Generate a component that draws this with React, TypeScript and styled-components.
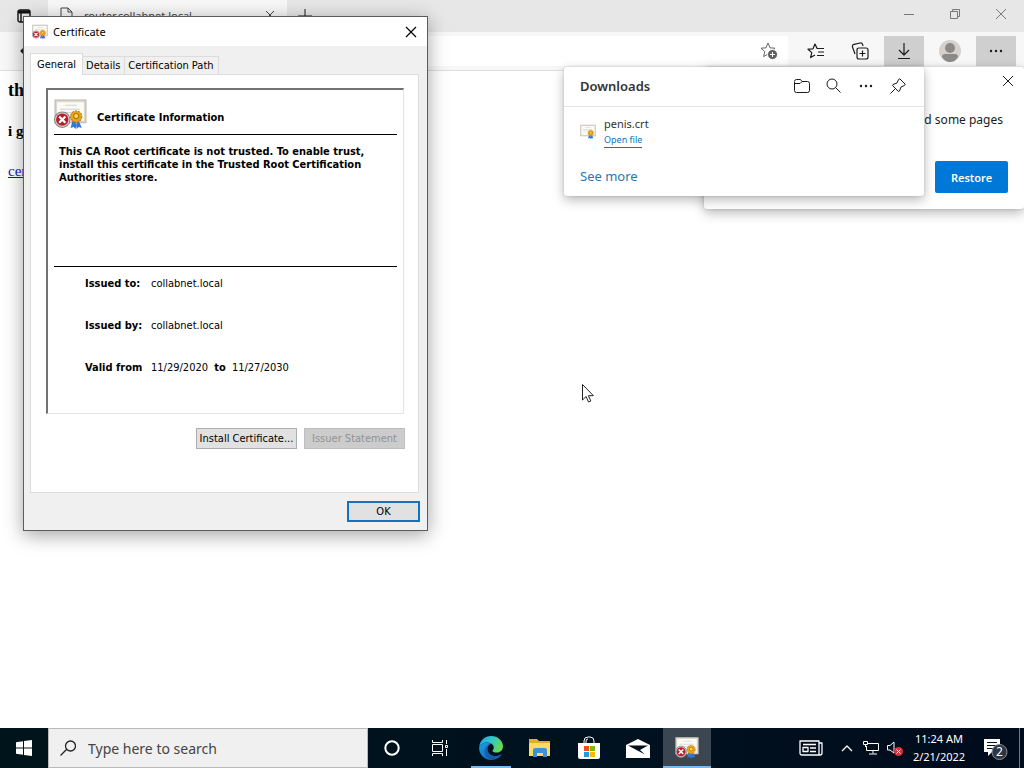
import React from "react";
import styled, { createGlobalStyle, css } from "styled-components";

const ui = `"Noto Sans", "Open Sans", sans-serif`;
const classic = `"DejaVu Sans Condensed", "DejaVu Sans", sans-serif`;

const GlobalStyle = createGlobalStyle`
  * { box-sizing: border-box; }
  body { margin: 0; background: #fff; font-family: ${ui}; color: #1b1b1b; overflow: hidden; }
  button { font: inherit; color: inherit; border: 0; padding: 0; background: none; }
  h1, h2, h3, h4, p, dl, dd, dt { margin: 0; font-size: inherit; }
  svg { display: block; flex: none; }
`;

const Desktop = styled.div`
  position: relative;
  min-height: 100vh;
  display: flex;
  flex-direction: column;
`;

/* Browser */
const Browser = styled.div`
  flex: 1;
  display: flex;
  flex-direction: column;
`;
const TitleBar = styled.header`
  height: 32px;
  display: flex;
  background: #e7e7e7;
`;
const TabActions = styled.button`
  width: 48px;
  display: grid;
  place-items: center;
`;
const BrowserTab = styled.div`
  width: 239px;
  padding: 0 11px 2px;
  display: flex;
  align-items: center;
  gap: 10px;
  background: #f7f7f7;
  color: #444;
  font-size: 11px;
  span { flex: 1; }
`;
const NewTab = styled.button`
  width: 36px;
  display: grid;
  place-items: center;
`;
const WindowButtons = styled.div`
  margin-left: auto;
  display: flex;
  color: #777;
`;
const WindowButton = styled.button`
  width: 46px;
  height: 28px;
  display: grid;
  place-items: center;
`;
const Toolbar = styled.div`
  height: 39px;
  padding: 0 8px 0 12px;
  display: flex;
  align-items: center;
  gap: 4px;
  background: #f7f7f7;
  border-bottom: 1px solid #dedede;
`;
const AddressBar = styled.div`
  flex: 1;
  height: 30px;
  margin-right: 4px;
  padding-right: 10px;
  display: flex;
  align-items: center;
  background: #fff;
  border-radius: 2px;
`;
const AddressInput = styled.input`
  flex: 1;
  border: 0;
  background: none;
  outline: none;
`;
const ToolButton = styled.button<{ $active?: boolean; $wide?: boolean }>`
  width: ${(p) => (p.$wide ? 44 : 40)}px;
  height: 30px;
  display: grid;
  place-items: center;
  background: ${(p) => (p.$active ? "#cfcfcf" : "transparent")};
`;
const BackButton = styled(ToolButton)`
  justify-items: start;
  padding-left: 8px;
`;
const PageBody = styled.main`
  flex: 1;
  padding: 8px;
  font-family: "Liberation Serif", serif;
  font-size: 15px;
  line-height: 20px;
  color: #000;
  display: flex;
  flex-direction: column;
  align-items: flex-start;
  gap: 20px;
  h1 { font-size: 18px; line-height: 22px; }
  a { color: #1414c8; }
`;

/* Popups */
const Popup = styled.section`
  position: absolute;
  top: 67px;
  background: #fff;
  border-radius: 3px;
  box-shadow: 0 4px 12px rgba(0, 0, 0, 0.28), 0 0 3px rgba(0, 0, 0, 0.14);
`;
const RestorePopup = styled(Popup)`
  right: 0;
  width: 320px;
  height: 142px;
  padding: 4px 16px 16px;
  display: flex;
  flex-direction: column;
  align-items: flex-end;
  button[aria-label] { margin-right: -16px; }
  p { width: max-content; margin: 19px 5px 0 0; font-size: 12px; line-height: 20px; }
`;
const RestoreButton = styled.button`
  && {
    margin-top: auto;
    width: 73px;
    height: 32px;
    border-radius: 2px;
    background: #0078d7;
    color: #fff;
    font-size: 11px;
    font-weight: 600;
  }
`;
const IconButton = styled.button`
  width: 32px;
  height: 20px;
  display: grid;
  place-items: center;
`;
const DownloadsPopup = styled(Popup)`
  right: 100px;
  width: 360px;
`;
const DownloadsHeader = styled.header`
  height: 40px;
  padding: 0 10px 2px 16px;
  display: flex;
  align-items: center;
  border-bottom: 1px solid #e3e3e3;
  h2 { flex: 1; font-size: 13px; font-weight: 600; color: #333; }
`;
const DownloadRow = styled.div`
  padding: 8px 16px 0;
  display: flex;
  align-items: center;
  gap: 8px;
`;
const DownloadInfo = styled.div`
  display: flex;
  flex-direction: column;
  align-items: flex-start;
  font-size: 11px;
  line-height: 18px;
  color: #333;
`;
const OpenLink = styled.a`
  font-size: 9px;
  line-height: 14px;
  color: #1a6fb5;
  text-decoration: none;
  border-bottom: 1px solid #1a6fb5;
`;
const SeeMore = styled.a`
  display: block;
  padding: 18px 16px 10px;
  font-size: 13px;
  line-height: 20px;
  color: #2a76b4;
  text-decoration: none;
`;

/* Certificate dialog */
const Dialog = styled.section`
  position: absolute;
  left: 23px;
  top: 16px;
  width: 405px;
  background: #f0f0f0;
  border: 1px solid #5c5c5c;
  box-shadow: 0 4px 18px rgba(0, 0, 0, 0.36);
  font-family: ${classic};
  font-size: 11px;
  line-height: 13px;
  color: #000;
`;
const DialogTitle = styled.header`
  height: 29px;
  padding: 0 0 0 8px;
  display: flex;
  align-items: center;
  gap: 5px;
  background: #fff;
  font-family: ${ui};
  h2 { flex: 1; font-size: 11px; font-weight: 400; }
`;
const DialogBody = styled.div`
  padding: 7px 8px 8px 6px;
  display: flex;
  flex-direction: column;
`;
const Tabs = styled.div`
  display: flex;
  align-items: flex-end;
  height: 21px;
`;
const Tab = styled.button<{ $selected?: boolean }>`
  height: 18px;
  padding: 0 4px 0 3px;
  white-space: nowrap;
  border: 1px solid #dcdcdc;
  border-left-width: 0;
  border-bottom: 0;
  ${(p) =>
    p.$selected &&
    css`
      position: relative;
      height: 22px;
      margin-bottom: -1px;
      padding: 0 6px;
      background: #fff;
      border-left-width: 1px;
    `}
`;
const TabPanel = styled.div`
  height: 419px;
  padding: 13px 14px 0 15px;
  background: #fff;
  border: 1px solid #dcdcdc;
`;
const CertBox = styled.div`
  height: 326px;
  padding: 8px 6px 0;
  border: 1px solid #e3e3e3;
  border-top: 2px solid #737373;
  border-left: 2px solid #737373;
`;
const CertHeading = styled.div`
  height: 37px;
  display: flex;
  align-items: flex-start;
  gap: 10px;
  border-bottom: 1px solid #000;
  h3 { margin-top: 13px; font-weight: 700; }
`;
const CertMessage = styled.p`
  height: 132px;
  padding: 10px 5px 0;
  font-weight: 700;
  border-bottom: 1px solid #000;
`;
const CertFields = styled.dl`
  padding: 10px 0 0 31px;
  display: flex;
  flex-direction: column;
  gap: 29px;
`;
const Field = styled.div`
  display: flex;
  gap: 7px;
  dt { min-width: 59px; font-weight: 700; }
  b { margin: 0 3px; }
`;
const PanelActions = styled.div`
  display: flex;
  justify-content: flex-end;
  gap: 7px;
  margin: 14px -1px 0 0;
`;
const ClassicButton = styled.button<{ $primary?: boolean }>`
  width: ${(p) => (p.$primary ? 73 : 101)}px;
  height: 21px;
  white-space: nowrap;
  background: #e1e1e1;
  border: 1px solid #adadad;
  &:disabled { background: #ccc; border-color: #bfbfbf; color: #929292; }
  ${(p) =>
    p.$primary &&
    css`
      align-self: flex-end;
      margin: 8px -1px 0 0;
      border: 2px solid #1473c0;
    `}
`;

/* Taskbar */
const Taskbar = styled.footer`
  position: relative;
  height: 40px;
  display: flex;
  background: linear-gradient(90deg, #00141c, #00111f 60%, #000b1c);
  color: #fff;
`;
const TaskButton = styled.button<{ $state?: "running" | "active" }>`
  width: 48px;
  display: grid;
  place-items: center;
  background: ${(p) => (p.$state === "active" ? "#3b4651" : "transparent")};
  ${(p) =>
    p.$state &&
    css`
      background-image: linear-gradient(#76b9ed, #76b9ed);
      background-repeat: no-repeat;
      background-position: center bottom;
      background-size: ${p.$state === "active" ? "48px" : "40px"} 2px;
    `}
`;
const Search = styled.label`
  width: 320px;
  padding: 0 11px;
  display: flex;
  align-items: center;
  gap: 12px;
  background: #f0f0f0;
  border: 1px solid #b9b9b9;
  color: #222;
`;
const SearchInput = styled.input`
  flex: 1;
  min-width: 0;
  padding: 0;
  border: 0;
  outline: none;
  background: none;
  font-family: ${ui};
  font-size: 14px;
  &::placeholder { color: #444; opacity: 1; }
`;
const Apps = styled.div`
  display: flex;
  gap: 1px;
  margin-left: 3px;
`;
const Tray = styled.div`
  margin-left: auto;
  display: flex;
  align-items: center;
`;
const TrayButton = styled.button<{ $w: number }>`
  width: ${(p) => p.$w}px;
  height: 40px;
  display: grid;
  place-items: center;
`;
const Clock = styled.time`
  width: 68px;
  text-align: center;
  font-size: 11px;
  line-height: 18px;
`;
const ShowDesktop = styled.button`
  width: 5px;
  height: 40px;
  border-left: 1px solid #6d7680;
`;
const Pointer = styled.svg`
  position: absolute;
  left: 582px;
  top: 384px;
`;

const CertIcon = ({ size, error = true }: { size: number; error?: boolean }) => (
  <svg width={size} height={size} viewBox="0 0 32 32">
    <path d="M1 2h30v22H1z" fill="#ded9cd" stroke="#b9b6ae" />
    <path d="M3 4h26v18H3z" fill="#fbfaf4" />
    <path d="M11 7h11M6 11h19M6 14h16" stroke="#d0d1d6" fill="none" />
    <path d="M18 22l-2 7 3-1 2 2 1-7zM24 22l3 7-3-1-2 2-1-7z" fill="#3376d6" />
    <circle cx="21.500" cy="18" r="5.500" fill="#eca51b" stroke="#b77a0d" strokeDasharray="2 1" />
    <circle cx="21.500" cy="17.500" r="2.500" fill="#ffd95a" stroke="#b47308" />
    {error && (
      <>
        <circle cx="8" cy="21" r="7.500" fill="#d7d3d3" stroke="#8b7f7f" />
        <circle cx="8" cy="21" r="6" fill="#b51f2c" />
        <path d="M5 18l6 6M11 18l-6 6" stroke="#fff" strokeWidth="2.200" />
      </>
    )}
  </svg>
);
const Line = ({ w = 16, h = 16, d, sw = 1 }: { w?: number; h?: number; d: string; sw?: number }) => (
  <svg width={w} height={h} viewBox={`0 0 ${w} ${h}`} fill="none" stroke="currentColor" strokeWidth={sw} strokeLinejoin="round">
    <path d={d} />
  </svg>
);
const Dots = () => (
  <svg width="14" height="4" viewBox="0 0 14 4" fill="currentColor">
    <circle cx="2" cy="2" r="1.200" /><circle cx="7" cy="2" r="1.200" /><circle cx="12" cy="2" r="1.200" />
  </svg>
);
const CROSS = "M1 1l10 10M11 1L1 11";
const STAR = "M8 1l2 4.800 5 .4-3.800 3.400 1.200 5L8 12l-4.400 2.600 1.200-5L1 6.200l5-.4z";

const EdgeIcon = () => (
  <svg width="24" height="24" viewBox="0 0 24 24">
    <defs>
      <linearGradient id="top" x1="0" y1="0" x2="1" y2=".4"><stop stopColor="#249de0" /><stop offset=".5" stopColor="#2fc5cf" /><stop offset="1" stopColor="#62d957" /></linearGradient>
      <linearGradient id="low" x1="0" y1="0" x2="1" y2="1"><stop stopColor="#1b9ee6" /><stop offset="1" stopColor="#1457ad" /></linearGradient>
    </defs>
    <path d="M.3 10.500C1 4.500 5.800 0 12 0c7 0 12 5 12 10.300 0 4-3 6.300-6.300 6.300-2.900 0-4.200-1-4.200-1.700 0-.8 1.300-1.300 1.300-3.400 0-2.700-2.900-5-6.800-5C4.200 6.500 1.600 8.200.3 10.500z" fill="url(#top)" />
    <path d="M.2 11c1-2.700 4-4.500 7.800-4.500 1.700 0 3 .4 4 1C9.500 8.500 8 11.200 8.500 14.300c.6 3.700 4.600 6.400 9 5.700 2-.3 3.500-1.100 4.300-1.500.5-.3.9.2.6.6C20.200 22 16.500 24 12.300 24 5.200 24-.6 18.200.2 11z" fill="url(#low)" />
    <path d="M12 7.500C9.500 8.500 8 11.200 8.500 14.300c.6 3.700 4.600 6.400 9 5.700l-2 2.800c-5.500 1.500-10-2.300-10-7.300 0-4 2.800-7 6.500-8z" fill="#124f9e" opacity=".6" />
  </svg>
);

export default function App() {
  return (
    <Desktop>
      <GlobalStyle />
      <Browser>
        <TitleBar>
          <TabActions aria-label="Tab actions">
            <svg width="14" height="14" viewBox="0 0 14 14" fill="none" stroke="#111" strokeWidth="1.400"><rect x="1" y="1" width="12" height="12" rx="2" /><path d="M1 3h12" strokeWidth="3" /><path d="M4 4v9" /></svg>
          </TabActions>
          <BrowserTab>
            <Line w={15} h={16} d="M2 1h7l4 4v10H2zM9 1v4h4" />
            <span>router.collabnet.local</span>
            <Line w={12} h={12} d="M2 2l8 8M10 2l-8 8" />
          </BrowserTab>
          <NewTab aria-label="New tab"><Line w={14} h={14} d="M7 0v14M0 7h14" /></NewTab>
          <WindowButtons>
            <WindowButton aria-label="Minimize"><Line w={12} h={12} d="M1 6.500h10" /></WindowButton>
            <WindowButton aria-label="Maximize"><Line w={12} h={12} d="M1.500 3.500h7v7h-7zM3.500 3V1.500h7v7H9" /></WindowButton>
            <WindowButton aria-label="Close"><Line w={12} h={12} d={CROSS} /></WindowButton>
          </WindowButtons>
        </TitleBar>
        <Toolbar>
          <BackButton aria-label="Back"><Line sw={1.3} d="M15 8H1M6 3L1 8l5 5" /></BackButton>
          <AddressBar>
            <AddressInput aria-label="Address" />
            <svg width="18" height="18" viewBox="0 0 18 18" fill="none" stroke="#666"><path d={STAR} /><circle cx="12.500" cy="12.500" r="5" fill="#5f5f5f" stroke="#fff" /><path d="M12.500 10v5M10 12.500h5" stroke="#fff" /></svg>
          </AddressBar>
          <ToolButton aria-label="Favorites">
            <Line w={18} h={16} sw={1.2} d="M10 5.300L8 1 6 5.800 1 6.200l3.800 3.400-1.200 5L8 12M9.500 5.500H17M11 9h6M10 12.500h7" />
          </ToolButton>
          <ToolButton aria-label="Collections">
            <Line w={18} h={18} sw={1.2} d="M8 6h7q2 0 2 2v7q0 2-2 2H8q-2 0-2-2V8q0-2 2-2M11.500 8.500v6M8.500 11.500h6M4 12L1.500 5Q1 3 3 2.300L9 1q2-.3 2.700 1.700L12 4" />
          </ToolButton>
          <ToolButton aria-label="Downloads" $active>
            <Line d="M8 0v12M3 7l5 5 5-5M2 15.500h12" sw={1.2} />
          </ToolButton>
          <ToolButton aria-label="Profile" $wide>
            <svg width="22" height="22" viewBox="0 0 22 22"><circle cx="11" cy="11" r="11" fill="#d4d1ce" /><circle cx="11" cy="8" r="5" fill="#8c8a88" /><path d="M3 17q0-3 3-3h10q3 0 3 3-3 5-8 5t-8-5z" fill="#8c8a88" /></svg>
          </ToolButton>
          <ToolButton aria-label="Settings and more" $active><Dots /></ToolButton>
        </Toolbar>
        <PageBody>
          <h1>this</h1>
          <h2>i got</h2>
          <a href="#cert">cert</a>
        </PageBody>
      </Browser>

      <RestorePopup aria-label="Restore pages">
        <IconButton aria-label="Close"><Line w={12} h={12} d={CROSS} /></IconButton>
        <p>Microsoft Edge closed while you had some pages<br />open</p>
        <RestoreButton>Restore</RestoreButton>
      </RestorePopup>

      <DownloadsPopup aria-label="Downloads">
        <DownloadsHeader>
          <h2>Downloads</h2>
          <IconButton aria-label="Open folder"><Line w={16} h={14} d="M.5 3v8.500q0 2 2 2h11q2 0 2-2v-7q0-2-2-2H8L6.500.5h-4q-2 0-2 2M.5 4.500H6l2-2" /></IconButton>
          <IconButton aria-label="Search"><Line w={16} h={16} d="M9.500 9.500l5 5M11 6A5 5 0 1 1 1 6a5 5 0 0 1 10 0z" /></IconButton>
          <IconButton aria-label="More"><Dots /></IconButton>
          <IconButton aria-label="Pin"><Line w={16} h={16} d="M10 1l5 5q.5 1-.5 1.500L11 9l-1.500 4q-.5 1-1.300.2L2.800 7.800Q2 7 3 6.500L7 5l1.500-3.500Q9 .5 10 1M5.500 10.500L.5 15.500" /></IconButton>
        </DownloadsHeader>
        <DownloadRow>
          <CertIcon size={16} error={false} />
          <DownloadInfo>
            <span>penis.crt</span>
            <OpenLink href="#open">Open file</OpenLink>
          </DownloadInfo>
        </DownloadRow>
        <SeeMore href="#downloads">See more</SeeMore>
      </DownloadsPopup>

      <Dialog role="dialog" aria-label="Certificate">
        <DialogTitle>
          <CertIcon size={16} />
          <h2>Certificate</h2>
          <IconButton aria-label="Close"><Line w={12} h={12} d={CROSS} sw={1.2} /></IconButton>
        </DialogTitle>
        <DialogBody>
          <Tabs role="tablist">
            <Tab role="tab" aria-selected $selected>General</Tab>
            <Tab role="tab">Details</Tab>
            <Tab role="tab">Certification Path</Tab>
          </Tabs>
          <TabPanel role="tabpanel">
            <CertBox>
              <CertHeading>
                <CertIcon size={33} />
                <h3>Certificate Information</h3>
              </CertHeading>
              <CertMessage>
                This CA Root certificate is not trusted. To enable trust, install this certificate in the Trusted Root Certification Authorities store.
              </CertMessage>
              <CertFields>
                <Field><dt>Issued to:</dt><dd>collabnet.local</dd></Field>
                <Field><dt>Issued by:</dt><dd>collabnet.local</dd></Field>
                <Field><dt>Valid from</dt><dd>11/29/2020 <b>to</b> 11/27/2030</dd></Field>
              </CertFields>
            </CertBox>
            <PanelActions>
              <ClassicButton>Install Certificate...</ClassicButton>
              <ClassicButton disabled>Issuer Statement</ClassicButton>
            </PanelActions>
          </TabPanel>
          <ClassicButton $primary>OK</ClassicButton>
        </DialogBody>
      </Dialog>

      <Taskbar>
        <TaskButton aria-label="Start">
          <svg width="16" height="16" viewBox="0 0 16 16" fill="#fff"><path d="M0 2.300L7 1.200v6.300H0zM8 1l8-1v7.500H8zM0 8.500h7v6.300l-7-1zM8 8.500h8V16l-8-1.100z" /></svg>
        </TaskButton>
        <Search>
          <Line w={16} h={16} sw={1.3} d="M6.500 9.500L.5 15.500M15.500 6A5 5 0 1 1 5.500 6a5 5 0 0 1 10 0z" />
          <SearchInput aria-label="Search" placeholder="Type here to search" />
        </Search>
        <TaskButton aria-label="Cortana">
          <svg width="16" height="16" viewBox="0 0 16 16"><circle cx="8" cy="8" r="6.700" fill="none" stroke="#fff" strokeWidth="2" /></svg>
        </TaskButton>
        <TaskButton aria-label="Task view">
          <Line w={17} h={16} d="M.5 0v2.500h10V0M.5 16v-2.500h10V16M.5 4.500h10v7H.5zM14.500 0v4M14.500 9v7M13.500 5.500h2v2h-2z" />
        </TaskButton>
        <Apps>
          <TaskButton aria-label="Microsoft Edge" $state="running"><EdgeIcon /></TaskButton>
          <TaskButton aria-label="File Explorer">
            <svg width="22" height="20" viewBox="0 0 22 20"><path d="M0 1h8l2 2h11v4H0z" fill="#e8a92b" /><path d="M1 5h20v13H0V6z" fill="#ffd869" /><path d="M4 19v-7q0-2 2-2h10q2 0 2 2v7h-4v-4H8v4z" fill="#3d91d4" /></svg>
          </TaskButton>
          <TaskButton aria-label="Microsoft Store">
            <svg width="24" height="24" viewBox="0 0 24 24"><path d="M7 7V5q0-4 4-4h2q4 0 4 4v2M9 7V5q0-2 2-2" fill="none" stroke="#fff" /><path d="M1 7h22v14q0 2-2 2H3q-2 0-2-2z" fill="#fff" /><path d="M7 10h5v5H7z" fill="#ef4c26" /><path d="M13 10h5v5h-5z" fill="#7fb900" /><path d="M7 16h5v5H7z" fill="#1d9be5" /><path d="M13 16h5v5h-5z" fill="#fdb813" /></svg>
          </TaskButton>
          <TaskButton aria-label="Mail">
            <svg width="24" height="20" viewBox="0 0 24 20"><path d="M0 7l12-6 12 6v13H0z" fill="#fff" /><path d="M2 7.500h20L14 12l5 4.500L2 7.500z" fill="#00111c" /></svg>
          </TaskButton>
          <TaskButton aria-label="Certificate" $state="active"><CertIcon size={24} /></TaskButton>
        </Apps>
        <Tray>
          <TrayButton $w={52} aria-label="News">
            <Line w={24} h={16} sw={1.3} d="M1 1h19v14H3q-2 0-2-2zM20 3h3v10q0 2-2 2h-2M4 4.500h13M4 7.500h5v4H4zM11 8h6M11 11.500h6" />
          </TrayButton>
          <TrayButton $w={20} aria-label="Show hidden icons"><Line w={12} h={8} sw={1.3} d="M1 7l5-5 5 5" /></TrayButton>
          <TrayButton $w={28} aria-label="Network"><Line w={16} h={14} d="M5 2.500h10.500v7H3.500V5M10 9.500v3M6 13h8M.5.5h4v3h-4zM2.500 4v2" /></TrayButton>
          <TrayButton $w={20} aria-label="Volume muted">
            <svg width="16" height="15" viewBox="0 0 16 15"><path d="M.5 4.500H3L7 1v11L3 9H.5z" fill="none" stroke="#fff" /><circle cx="11.500" cy="10.500" r="4.500" fill="#d13438" /><path d="M9.500 8.500l4 4M13.500 8.500l-4 4" stroke="#fff" /></svg>
          </TrayButton>
          <Clock>11:24 AM<br />2/21/2022</Clock>
          <TrayButton $w={46} aria-label="Notifications, 2 new">
            <svg width="24" height="24" viewBox="0 0 24 24"><path d="M0 3h16v13H8l-4 4v-4H0z" fill="#fff" /><path d="M3 6.500h10M3 9.500h10M3 12.500h8" stroke="#00101c" /><circle cx="15.500" cy="16" r="7.500" fill="#2b3641" stroke="#89919a" /><text x="15.500" y="20" fontSize="12" textAnchor="middle" fill="#fff" fontFamily="Noto Sans">2</text></svg>
          </TrayButton>
          <ShowDesktop aria-label="Show desktop" />
        </Tray>
      </Taskbar>

      <Pointer width="12" height="20" viewBox="0 0 12 20"><path d="M.5.5v15.500l3.600-3.500 2.400 5.500 2.300-1-2.400-5.300h5z" fill="#fff" stroke="#222" /></Pointer>
    </Desktop>
  );
}
